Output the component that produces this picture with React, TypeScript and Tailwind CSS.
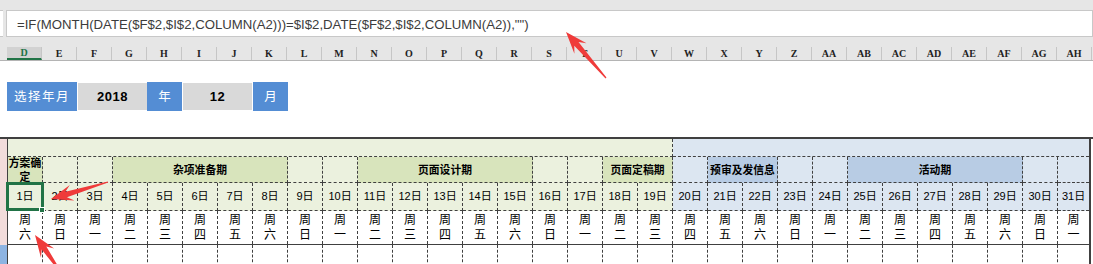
import React from "react";

const cols = [
  "D", "E", "F", "G", "H", "I", "J", "K", "L", "M", "N", "O", "P", "Q", "R", "S",
  "T", "U", "V", "W", "X", "Y", "Z", "AA", "AB", "AC", "AD", "AE", "AF", "AG", "AH",
];

const weekNames = ["日", "一", "二", "三", "四", "五", "六"];
const days = Array.from({ length: 31 }, (_, i) => i + 1);

type Tone = "g" | "G" | "b" | "B";

interface Phase {
  span: number;
  label?: string;
  tone: Tone;
}

const phases: Phase[] = [
  { span: 1, label: "方案确定", tone: "G" },
  { span: 1, tone: "g" },
  { span: 1, tone: "g" },
  { span: 5, label: "杂项准备期", tone: "G" },
  { span: 1, tone: "g" },
  { span: 1, tone: "g" },
  { span: 5, label: "页面设计期", tone: "G" },
  { span: 1, tone: "g" },
  { span: 1, tone: "g" },
  { span: 2, label: "页面定稿期", tone: "G" },
  { span: 1, tone: "b" },
  { span: 2, label: "预审及发信息", tone: "B" },
  { span: 1, tone: "b" },
  { span: 1, tone: "b" },
  { span: 5, label: "活动期", tone: "B" },
  { span: 1, tone: "b" },
  { span: 1, tone: "b" },
];

const spanClass: Record<number, string> = {
  1: "col-span-1",
  2: "col-span-2",
  5: "col-span-5",
};

const toneClass: Record<Tone, string> = {
  g: "bg-[#ebf1de]",
  G: "bg-[#d8e4bc]",
  b: "bg-[#dce6f1]",
  B: "bg-[#b8cce4]",
};

// 2018-12-01 is a Saturday
const weekday = (d: number) => weekNames[(5 + d) % 7];

function arrowPoints(tx: number, ty: number, hx: number, hy: number) {
  const dx = hx - tx;
  const dy = hy - ty;
  const len = Math.hypot(dx, dy);
  const ux = dx / len;
  const uy = dy / len;
  const nx = -uy;
  const ny = ux;
  const headLen = 22;
  const wing = 8;
  const neck = 2.8;
  const tail = 0.6;
  const bx = hx - ux * headLen;
  const by = hy - uy * headLen;
  const kx = hx - ux * headLen * 0.72;
  const ky = hy - uy * headLen * 0.72;
  const pts = [
    [tx + nx * tail, ty + ny * tail],
    [kx + nx * neck, ky + ny * neck],
    [bx + nx * wing, by + ny * wing],
    [hx, hy],
    [bx - nx * wing, by - ny * wing],
    [kx - nx * neck, ky - ny * neck],
    [tx - nx * tail, ty - ny * tail],
  ];
  return pts.map((p) => p.join(",")).join(" ");
}

const dash = "border-dashed border-[#404040]";

export default function App() {
  return (
    <div className="relative w-[1093px] h-[264px] overflow-hidden bg-white font-['Liberation_Sans','Noto_Sans_CJK_SC',sans-serif]">
      {/* formula bar + column headers */}
      <div className="h-[61px] bg-[#e6e6e6]">
        <div className="h-[10px]" />
        <div className="flex h-[27px]">
          <div className="w-[3px] bg-white border-y border-[#c8c8c8]" />
          <div className="w-[3px]" />
          <div className="flex-1 flex items-center pl-[10px] pt-[2px] bg-white border border-[#c8c8c8] text-[13.2px] text-[#3c3c3c] whitespace-nowrap">
            {'=IF(MONTH(DATE($F$2,$I$2,COLUMN(A2)))=$I$2,DATE($F$2,$I$2,COLUMN(A2)),"")'}
          </div>
        </div>
        <div className="h-[10px]" />
        <div className="flex h-[14px] pl-[7px] border-b border-[#b4b4b4]">
          {cols.map((c, i) => (
            <div
              key={c}
              className={`w-[35px] shrink-0 flex items-center justify-center border-r border-[#c6c6c6] font-['Liberation_Serif',serif] font-bold text-[10px] leading-none ${
                i === 0 ? "bg-[#d2d2d2] text-[#217346] border-b-2 border-b-[#217346]" : "text-[#222]"
              }`}
            >
              {c}
            </div>
          ))}
        </div>
      </div>

      {/* month picker */}
      <div className="h-[21px]" />
      <div className="flex items-center h-[29px] pl-[7px] font-['Noto_Sans_CJK_SC',sans-serif]">
        <div className="w-[70px] h-[29px] flex items-center justify-center bg-[#548dd4] text-white text-[12.5px] tracking-[1.5px]">
          选择年月
        </div>
        <div className="w-[69px] h-[27px] ml-[1px] flex items-center justify-center bg-[#d9d9d9] text-black text-[13px] font-bold tracking-[0.5px] font-['Liberation_Sans',sans-serif]">
          2018
        </div>
        <div className="w-[35px] h-[29px] flex items-center justify-center bg-[#548dd4] text-white text-[12.5px]">
          年
        </div>
        <div className="w-[69px] h-[27px] ml-[1px] flex items-center justify-center bg-[#d9d9d9] text-black text-[13px] font-bold tracking-[0.5px] font-['Liberation_Sans',sans-serif]">
          12
        </div>
        <div className="w-[35px] h-[29px] ml-[1px] flex items-center justify-center bg-[#548dd4] text-white text-[12.5px]">
          月
        </div>
      </div>
      <div className="h-[26px]" />

      {/* schedule sheet */}
      <div className="flex border-t-2 border-[#404040]">
        <div className="w-[7px] flex flex-col">
          <div className="h-[106px] bg-[#f2dcdb]" />
          <div className="flex-1 bg-[#8db4e2]" />
        </div>
        <div className="relative border-l border-r-2 border-[#404040]">
          <div className="grid grid-cols-[repeat(30,35px)_31px] text-black">
            {/* spacer row */}
            <div className={`col-span-19 h-[18px] bg-[#ebf1de] border-r border-b ${dash}`} />
            <div className={`col-span-12 h-[18px] bg-[#dce6f1] border-b ${dash}`} />

            {/* phase row */}
            {phases.map((p, i) => (
              <div
                key={"p" + i}
                className={`${spanClass[p.span]} ${toneClass[p.tone]} h-[26px] border-b ${
                  i < phases.length - 1 ? "border-r" : ""
                } ${dash} flex items-center justify-center text-center font-bold text-[10.8px] leading-[14px] whitespace-normal break-all`}
              >
                {p.label}
              </div>
            ))}

            {/* day row */}
            {days.map((d) => (
              <div
                key={"d" + d}
                className={`h-[28px] border-b ${d < 31 ? "border-r" : ""} ${dash} ${
                  d <= 19 ? "bg-[#ebf1de]" : "bg-[#dce6f1]"
                } flex items-center justify-center text-[11px]`}
              >
                {d}日
              </div>
            ))}

            {/* weekday row */}
            {days.map((d) => (
              <div
                key={"w" + d}
                className={`h-[33px] ${d < 31 ? "border-r" : ""} ${dash} bg-white flex flex-col items-center justify-center text-[12px] leading-[15px]`}
              >
                <span>周</span>
                <span>{weekday(d)}</span>
              </div>
            ))}

            <div className="col-span-31 h-[1px] bg-[#404040]" />

            {/* empty row */}
            {days.map((d) => (
              <div key={"e" + d} className={`h-[22px] ${d < 31 ? "border-r" : ""} ${dash} bg-white`} />
            ))}
          </div>

          {/* active cell */}
          <div className="absolute left-[-2px] top-[43px] w-[38px] h-[29px] border-[3px] border-[#217346]" />
          <div className="absolute left-[31px] top-[68px] w-[6px] h-[6px] bg-[#217346] border border-white" />
        </div>
      </div>

      {/* annotation arrows */}
      <svg className="absolute inset-0 pointer-events-none" width={1093} height={264}>
        <polygon points={arrowPoints(606, 78, 566, 32)} fill="#ef3b3a" />
        <polygon points={arrowPoints(108, 182, 51, 199)} fill="#ef3b3a" />
        <polygon points={arrowPoints(62, 274, 35, 235)} fill="#ef3b3a" />
      </svg>
    </div>
  );
}
